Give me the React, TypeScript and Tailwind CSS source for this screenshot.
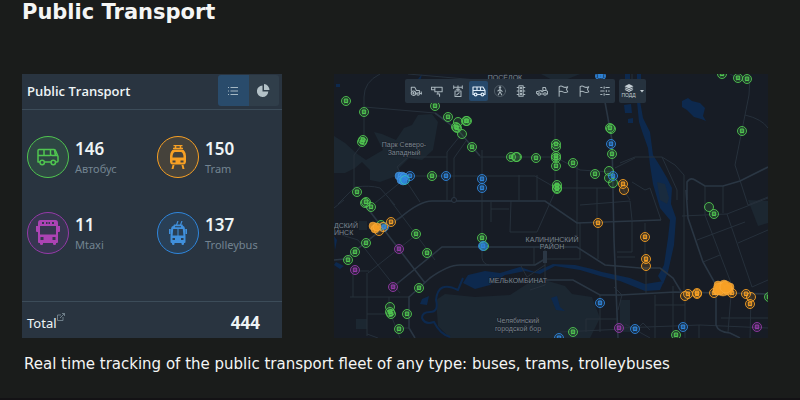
import type { ReactNode } from "react";

const GREEN = "#50c650";
const ORANGE = "#f7a024";
const BLUE = "#2f86dc";
const PURPLE = "#953aa8";

type Marker = [x: number, y: number, empty?: boolean];

const markers: { color: string; points: Marker[] }[] = [
  {
    color: GREEN,
    points: [
      [346, 101], [364, 112], [435, 106], [448, 117], [458, 122, true], [466, 121], [467, 121],
      [456, 127], [457, 128], [462, 134, true], [472, 147], [363, 140], [362, 142], [432, 176],
      [357, 192], [366, 202], [365, 203, true], [371, 207], [511, 157], [516, 157, true], [517, 157, true], [536, 158],
      [556, 144], [556, 147, true], [556, 156], [556, 158], [556, 166], [557, 185], [557, 188], [557, 189],
      [573, 163], [595, 174], [610, 128], [611, 129, true], [612, 154], [609, 171, true], [609, 178, true],
      [613, 183, true], [722, 74], [738, 78], [747, 79], [742, 131], [709, 207, true],
      [714, 214], [769, 297], [676, 335], [482, 238], [484, 246, true], [573, 332], [381, 225, true],
      [416, 234], [427, 253], [366, 243], [355, 252], [348, 260], [419, 288], [390, 307, true],
      [390, 312], [391, 314], [407, 314], [399, 329],
    ],
  },
  {
    color: BLUE,
    points: [
      [410, 176], [446, 176], [482, 179], [482, 188], [600, 76], [601, 76], [611, 144], [613, 176],
      [635, 329], [683, 327], [483, 246], [600, 303], [559, 338], [384, 227],
    ],
  },
  {
    color: ORANGE,
    points: [
      [623, 184], [624, 190, true], [645, 237], [646, 259], [646, 266, true], [685, 296, true],
      [688, 294], [697, 294], [697, 293], [714, 293], [732, 293], [746, 294], [751, 297, true],
      [750, 304], [598, 223], [391, 222], [379, 231, true], [383, 227, true],
    ],
  },
  {
    color: PURPLE,
    points: [[757, 327], [619, 328], [399, 249], [355, 270], [393, 287]],
  },
];

const clusters: { fill: string; edge: string; circles: [number, number, number][] }[] = [
  {
    fill: BLUE,
    edge: "#5aa9ee",
    circles: [[399, 176, 4], [402, 176, 4], [404, 177, 4], [401, 180, 4], [403, 181, 4]],
  },
  {
    fill: ORANGE,
    edge: "#ffb84d",
    circles: [
      [373, 226, 4], [375, 229, 4], [377, 227, 4],
      [718, 285, 4], [724, 284, 4], [730, 287, 4], [717, 291, 4], [723, 289, 7], [728, 290, 5], [719, 289, 6], [726, 287, 6],
    ],
  },
];

const mainRoads = [
  "M334 260L345 259L380 231L401 217Q420 201 432 201H545L577 223L661 220",
  "M393 287L442 247H577L605 265L640 268H660L673 278L682 293",
  "M415 338L409 328V297L430 278Q448 265 460 265H535L545 259",
  "M365 205L425 283",
  "M435 113L458 130L480 156",
  "M605 102L612 140L614 240L618 338",
  "M687 200V182Q690 177 695 180L705 186H723L740 181L768 167",
  "M686 190L688 218L703 262L716 285V325Q718 332 730 333L740 338",
  "M545 280H573L600 295H620L675 292L768 294",
];

const minorRoads = [
  "M380 74Q364 82 364 97V142L354 155V190",
  "M364 107L435 113",
  "M397 167L408 157H447M397 167L420 202",
  "M401 176H535L556 188H615",
  "M338 204L355 187Q370 185 380 188L395 205M375 203L402 181",
  "M447 200V152L460 136M454 200V158L466 141M482 150V258Q483 264 489 265",
  "M390 200L435 260M334 208L344 200M368 273L416 235M342 235L358 240L400 293",
  "M350 297H409M367 336V273M367 314H388M353 271V297M353 271H369M389 297V310L400 338M367 334L378 338M409 328H400",
  "M555 100V192L550 203L537 232H510L511 201M480 157H555L580 170L612 172L630 200",
  "M519 175V200M537 175V200M577 165V240M597 188V223M491 202V222M491 209H509",
  "M635 158L615 168M620 163L635 157H662L675 165L684 175V290M662 157L677 190V200",
  "M750 76L749 95L745 115L735 165L748 205M745 115Q762 119 768 128M730 74L745 82",
  "M705 186V215M723 186V213M748 205L768 197M682 216L727 214L768 198",
  "M705 215L731 283M727 214L752 287M697 240L745 222M703 262L720 255M738 243L768 230M752 287L768 280",
  "M731 295L728 332M751 297L750 338M620 328L700 325L768 328M721 318H768",
  "M646 268V293M673 286V338M655 295V338M655 305H685M685 293V338M699 325V338",
  "M534 247V265M545 250V285L530 290M521 266L527 277L545 265M545 259H580V223",
  "M560 332L625 329M586 332V319H618M600 295V332M614 287L622 295L618 310M580 205L630 201L632 220",
  "M598 223V259M632 74V100M617 252H632V221M617 257H635M645 223V265M632 182L645 190L650 188L661 220",
  "M408 74L500 82M625 324L650 338M636 330L643 323L650 330",
];

const water = [
  "M637 102L640 101L643 118L650 132L653 155L660 166L667 178L672 188L671 204L676 218L674 245L668 272L663 284L658 276L664 265L668 238L670 220L660 208L653 184L650 165L648 148L643 134L639 122Z",
  "M463 283L468 275L485 271L500 273L520 267L535 272L553 264L575 265L592 269L602 272L630 278L645 284L664 281L660 290L645 291L620 281L600 276L580 270L555 266L540 274L525 271L505 275L490 285L475 289Z",
  "M682 101L688 98L692 101L700 103L705 108L703 116L706 121L701 119L694 117L687 110L682 107Z",
  "M625 86H633V100H625ZM624 105L631 104L632 113L625 113ZM628 119L633 118V123H628ZM625 74H630V80H625ZM637 74H641V80H637Z",
  "M422 299L429 296L427 305L420 304ZM551 298L557 296L560 307L565 311L556 310ZM336 262L344 266L340 269L334 265ZM334 236L337 240L335 250Z",
  "M336 84H340V87H336ZM418 79L422 74L420 82Z",
];

const parks = [
  "M334 136L345 143L356 153L366 160L383 150L374 132L382 134L396 140L404 128L412 125L418 115L432 114L438 122L433 150L422 160L409 158L399 168L399 175L380 182L370 180L370 170L362 162L355 168L345 173L334 173Z",
  "M436 300L445 294L475 297L510 295L530 282L548 281L565 286L572 294L592 297L600 318L590 338H450L438 326Z",
  "M748 200L768 201V223L758 226Z",
  "M359 221H367V230H359ZM356 319H367V329H356ZM541 74H580L558 83Z",
  "M620 300H630V332H620Z",
];

function Map() {
  return (
    <svg
      className="absolute inset-0 h-full w-full"
      viewBox="334 74 434 264"
      preserveAspectRatio="xMidYMid slice"
      role="img"
      aria-label="Live positions of the public transport fleet"
    >
      <rect x="334" y="74" width="434" height="264" fill="#171c25" />
      <g fill="#1c2731">{parks.map((d) => <path key={d} d={d} />)}</g>
      <g fill="#0d294e">{water.map((d) => <path key={d} d={d} />)}</g>
      <path d="M657 182L665 184L669 198L667 204L660 200Z" fill="#192b3e" />
      <path
        d="M463 278L458 290Q438 280 436 300Q439 312 430 312Q422 312 422 318Q425 325 434 322Q440 334 450 337"
        fill="none"
        stroke="#0d294e"
        strokeWidth="2"
      />
      <g fill="none" stroke="#26303b" strokeWidth="1">
        {minorRoads.map((d) => <path key={d} d={d} />)}
      </g>
      <g fill="none" stroke="#2a3643" strokeWidth="1.6">
        {mainRoads.map((d) => <path key={d} d={d} />)}
      </g>
      <circle cx="454" cy="200" r="2.5" fill="#171c25" stroke="#2b3745" />
      <path d="M543 251H547V263H543Z" fill="#2b3745" />
      <g
        fill="#7c8791"
        stroke="#171c25"
        strokeWidth="1"
        paintOrder="stroke"
        textAnchor="middle"
        fontSize="7"
        className="font-['Liberation_Sans',sans-serif]"
      >
        <text x="404" y="147">Парк Северо-</text>
        <text x="404" y="155">Западный</text>
        <text x="505" y="80">ПОСЁЛОК</text>
        <text x="334" y="228" textAnchor="start">ДСКИЙ</text>
        <text x="334" y="235" textAnchor="start">ИНСК</text>
        <text x="552" y="242">КАЛИНИНСКИЙ</text>
        <text x="552" y="249">РАЙОН</text>
        <text x="518" y="283">МЕЛЬКОМБИНАТ</text>
        <text x="518" y="323">Челябинский</text>
        <text x="518" y="331">городской бор</text>
      </g>
      {markers.map(({ color, points }) => (
        <g key={color} stroke={color} fill={color}>
          {points.map(([x, y, empty]) => (
            <g key={`${x}-${y}`}>
              <circle cx={x} cy={y} r="4.5" fillOpacity="0.15" strokeWidth="0.9" />
              {!empty && (
                <path
                  d={`M${x - 1.7} ${y - 2}H${x + 1.7}V${y + 1.5}H${x - 1.7}ZM${x - 1.3} ${y + 1.5}V${y + 2.3}M${x + 1.3} ${y + 1.5}V${y + 2.3}`}
                  fillOpacity="0.5"
                  strokeWidth="1"
                />
              )}
            </g>
          ))}
        </g>
      ))}
      {clusters.map(({ fill, edge, circles }) => (
        <g key={fill} fill={fill} fillOpacity="0.85" stroke={edge} strokeWidth="0.6" strokeOpacity="0.7">
          {circles.map(([x, y, r]) => <circle key={`${x}-${y}`} cx={x} cy={y} r={r} />)}
        </g>
      ))}
      <g fill={BLUE} fillOpacity="0.6">
        <circle cx="405" cy="180" r="4.4" stroke="#35c5b8" strokeWidth="0.8" />
        <circle cx="483" cy="246" r="4" />
        <circle cx="384" cy="227" r="3" />
      </g>
    </svg>
  );
}

function Line({ children, size = 14 }: { children: ReactNode; size?: number }) {
  return (
    <svg
      width={size}
      height={size}
      viewBox="0 0 14 14"
      fill="none"
      stroke="currentColor"
      strokeWidth="1.2"
      strokeLinecap="round"
      strokeLinejoin="round"
      aria-hidden="true"
    >
      {children}
    </svg>
  );
}

const flag = <path d="M2.5 13V2Q4.500 0.5 7 2T12.500 2L11 5L12.500 8Q9.500 9.500 7 8T2.500 8" />;

const tools: { label: string; active?: boolean; icon: ReactNode }[] = [
  {
    label: "Road works",
    icon: (
      <>
        <circle cx="4" cy="9.500" r="2.600" />
        <circle cx="4" cy="9.500" r="0.600" />
        <circle cx="9.500" cy="10.500" r="1.500" />
        <path d="M1.500 7V2.500H5.500L7.500 6.500H11V9M7 9.500H8M11 9.500L13.500 10.500L13 8" />
      </>
    ),
  },
  { label: "Cameras", icon: <path d="M0.500 2.500H13V8H4.500V5.500H0.500ZM4.500 5.500V2.500M8 8V10.500H10V13M7 10.500H8" /> },
  {
    label: "Detectors",
    icon: <path d="M2 1V4M12 1V4M2 2.500H12M7 1V7M5 5H9M3.500 7H10.500V13.500H3.500ZM5.500 11.500L8.500 9" />,
  },
  {
    label: "Public transport",
    active: true,
    icon: (
      <>
        <path d="M2.300 10.500H1V3H11L13 6.500V10.500H11.800M5 10.500H9M1 6.500H13M5 3V6.500M8.500 3V6.500" />
        <circle cx="3.600" cy="10.500" r="1.400" />
        <circle cx="10.400" cy="10.500" r="1.400" />
      </>
    ),
  },
  {
    label: "Pedestrians",
    icon: (
      <>
        <circle cx="7" cy="7" r="6.500" strokeWidth="0.600" strokeOpacity="0.600" />
        <circle cx="7" cy="3" r="0.900" fill="currentColor" />
        <path d="M7 5V8L9 11.500M7 8L5 11.500M4.500 7L7 5L9.500 7.500" />
      </>
    ),
  },
  {
    label: "Traffic lights",
    icon: (
      <>
        <path d="M4.500 0.800H9.500V13.200H4.500ZM2.500 3H4.500M2.500 7H4.500M2.500 11H4.500M9.500 3H11.500M9.500 7H11.500M9.500 11H11.500" />
        <circle cx="7" cy="3.500" r="0.900" />
        <circle cx="7" cy="7" r="0.900" />
        <circle cx="7" cy="10.500" r="0.900" />
      </>
    ),
  },
  {
    label: "Tow trucks",
    icon: (
      <>
        <path d="M0.500 9.500V8L6 6.500L7 8H8V3H11L12 6.500L13.500 7.500V10.500H12.500M5.500 10.500H8.500M0.500 9.500L2 10.500M8 6.500H12" />
        <circle cx="3.700" cy="10.500" r="1.500" />
        <circle cx="10.500" cy="10.500" r="1.500" />
      </>
    ),
  },
  { label: "Events", icon: flag },
  { label: "Plans", icon: flag },
  {
    label: "Settings",
    icon: <path d="M2 3H3.500M6 2V4M8 3H12M2 7H6M8.500 6V8M11 7H12M2 11H3.500M6 10V12M8 11H12" />,
  },
];

function Toolbar() {
  return (
    <div className="absolute top-[5px] left-[71px] flex gap-1">
      <div role="toolbar" aria-label="Map layers" className="flex gap-[2px] rounded-[2px] bg-[#26323e] px-px py-[2px]">
        {tools.map((tool) => (
          <button
            key={tool.label}
            type="button"
            aria-label={tool.label}
            aria-pressed={!!tool.active}
            className={
              tool.active
                ? "flex h-5 w-[19px] items-center justify-center rounded-[2px] bg-[#26496b] text-[#dbe9f5]"
                : "flex h-5 w-[19px] items-center justify-center rounded-[2px] text-[#a9b6bd]"
            }
          >
            <Line size={tool.active ? 14 : 12}>{tool.icon}</Line>
          </button>
        ))}
      </div>
      <button
        type="button"
        className="flex w-[27px] items-center justify-center gap-1 rounded-[2px] bg-[#26323e] text-[#c3cdd3]"
      >
        <span className="flex flex-col items-center">
          <svg width="10" height="8" viewBox="0 0 10 9" fill="currentColor" aria-hidden="true">
            <path d="M5 0L10 2.500L5 5L0 2.500Z" />
            <path d="M0 4.500L1.500 3.800L5 5.600L8.500 3.800L10 4.500L5 7Z" />
            <path d="M0 6.500L1.500 5.800L5 7.600L8.500 5.800L10 6.500L5 9Z" />
          </svg>
          <span className="text-[5px] leading-[6px]">ПОДД</span>
        </span>
        <svg width="4" height="3" viewBox="0 0 4 3" fill="currentColor" aria-hidden="true">
          <path d="M0 0H4L2 2.500Z" />
        </svg>
      </button>
    </div>
  );
}

function VanIcon() {
  return (
    <svg width="22" height="18" viewBox="0 0 22 18" fill="none" stroke="currentColor" strokeWidth="1.500" strokeLinejoin="round" aria-hidden="true">
      <path d="M3 14H1V2.500Q1 1.500 2 1.500H17Q18.200 1.500 18.700 3L21 8.500V13Q21 14 20 14H18.500M7.500 14H14" />
      <path d="M1 7.500H13.500M13.500 1.500V6Q13.500 7.500 15 7.500H20.500M7 1.500V7.500M17.500 2L18.500 7.500" />
      <circle cx="5.200" cy="14.500" r="2.200" />
      <circle cx="16.300" cy="14.500" r="2.200" />
    </svg>
  );
}

function TramIcon() {
  return (
    <svg width="18" height="24" viewBox="0 0 18 24" fill="currentColor" aria-hidden="true">
      <path d="M4.500 0H13.500V1.300H12L12.500 2.800H14V4H4V2.800H5.500L6 1.300H4.500ZM7.300 1.300V2.800H10.700V1.300Z" fillRule="evenodd" />
      <path
        fillRule="evenodd"
        d="M5 4.500H13Q16.500 5 17 11V17Q16.500 19.500 14.500 19.500H3.500Q1.500 19.500 1 17V11Q1.500 5 5 4.500ZM6 7Q3.500 7.500 3.500 12.500H14.500Q14.500 7.500 12 7ZM3.500 15.500V17.500H6.500V15.500ZM11.500 15.500V17.500H14.500V15.500Z"
      />
      <path d="M3.500 20H5.500L4.500 24H2.500ZM12.500 20H14.500L15.500 24H13.500Z" />
    </svg>
  );
}

function BusIcon() {
  return (
    <svg width="24" height="26" viewBox="0 0 24 26" fill="currentColor" aria-hidden="true">
      <path
        fillRule="evenodd"
        d="M4.500 0H19.500Q22 0 22 3V22Q22 23 21 23H20V24Q20 25 18.500 25T17 24V23H7V24Q7 25 5.500 25T4 24V23H3Q2 23 2 22V3Q2 0 4.500 0ZM4 6V14.500H20V6ZM6 2V4H8V2ZM10 2V4H11.500V2ZM12.500 2V4H14V2ZM16 2V4H18V2ZM4.500 17V20H7.500V17ZM16.500 17V20H19.500V17Z"
      />
      <path d="M0 6H2V12H1Q0 12 0 11ZM22 6H24V11Q24 12 23 12H22Z" />
    </svg>
  );
}

function TrolleyIcon() {
  return (
    <svg width="18" height="24" viewBox="0 0 18 24" fill="currentColor" aria-hidden="true">
      <path d="M7.500 4L9 0M11.500 4L13 0" stroke="currentColor" strokeWidth="1.200" />
      <path
        fillRule="evenodd"
        d="M5 3.500H13.500L14 5Q15.500 5 15.800 7L16.500 15V21Q16.500 22 15.500 22H15V23Q15 24 13.800 24T12.500 23V22H5.500V23Q5.500 24 4.300 24T3 23V22H2.500Q1.500 22 1.500 21V15L2.200 7Q2.500 5 4.300 5ZM4.200 8L3.600 14.500H8.500V8ZM9.500 8V14.500H14.400L13.800 8ZM3.500 17V19H6V17ZM12 17V19H14.500V17ZM6 5.200V6.200H12V5.200Z"
      />
      <path d="M0 8H1.800L1.500 13H0ZM16.200 8H18V13H16.500Z" />
    </svg>
  );
}

const fleet = [
  { count: 146, label: "Автобус", icon: <VanIcon />, ring: "border-[#50c650] bg-[#2e4743] text-[#50c650]" },
  { count: 150, label: "Tram", icon: <TramIcon />, ring: "border-[#f7a024] bg-[#45423b] text-[#f7a024]" },
  { count: 11, label: "Mtaxi", icon: <BusIcon />, ring: "border-[#953aa8] bg-[#363650] text-[#ac43b4]" },
  { count: 137, label: "Trolleybus", icon: <TrolleyIcon />, ring: "border-[#2f86dc] bg-[#293f55] text-[#4090dc]" },
];

function FleetPanel() {
  return (
    <section className="flex w-[260px] shrink-0 flex-col bg-[#293440] font-['Noto_Sans','Open_Sans',sans-serif] text-[#eef4f6]">
      <header className="flex h-9 items-center justify-between border-b border-[#3c4c59] pr-[3px] pb-[2px] pl-[5px]">
        <h2 className="font-['Open_Sans','Noto_Sans',sans-serif] text-[13px] leading-5 font-semibold">Public Transport</h2>
        <div className="flex overflow-hidden rounded-[3px]">
          <button type="button" aria-label="List view" aria-pressed="true" className="flex h-[31px] w-[31px] items-center justify-center bg-[#294b6b] pr-[2px] text-[#a5b8c4]">
            <svg width="10" height="8" viewBox="0 0 10 8" fill="currentColor" aria-hidden="true">
              <path d="M0 0H1V1H0ZM2.500 0H10V1H2.500ZM0 3.500H1V4.500H0ZM2.500 3.500H10V4.500H2.500ZM0 7H1V8H0ZM2.500 7H10V8H2.500Z" />
            </svg>
          </button>
          <button type="button" aria-label="Chart view" aria-pressed="false" className="flex h-[31px] w-[30px] items-center justify-center bg-[#303e4a] pr-[2px] text-[#b3c1c7]">
            <svg width="13" height="13" viewBox="0 0 13 13" fill="currentColor" aria-hidden="true">
              <path d="M5.500 1.500V7.500H11.300A5.700 5.700 0 1 1 5.500 1.500Z" />
              <path d="M7 0A6 6 0 0 1 12.500 6H7Z" />
            </svg>
          </button>
        </div>
      </header>
      <ul className="grid grow grid-cols-[130px_1fr] content-start gap-y-[34px] pt-[26px] pl-[5px]">
        {fleet.map((item) => (
          <li key={item.label} className="flex h-[42px] gap-[6px]">
            <span className={`flex h-[42px] w-[42px] shrink-0 items-center justify-center rounded-full border ${item.ring}`}>
              {item.icon}
            </span>
            <span className="flex flex-col pt-[3px]">
              <strong className="text-[17px] leading-5 font-semibold">{item.count}</strong>
              <span className="text-[11px] leading-5 text-[#738491]">{item.label}</span>
            </span>
          </li>
        ))}
      </ul>
      <footer className="flex h-[37px] items-center justify-between border-t border-[#3c4c59] pt-[5px] pr-[22px] pl-[5px]">
        <a href="#total" className="flex text-[13px] leading-5">
          Total
          <svg width="8" height="8" viewBox="0 0 8 8" fill="none" stroke="#7f909b" strokeWidth="0.800" aria-hidden="true">
            <path d="M4 2H0.500V7.500H6V4M5 0.500H7.500V3M7.500 0.500L3 5" />
          </svg>
        </a>
        <strong className="text-[17px] leading-5 font-bold">444</strong>
      </footer>
    </section>
  );
}

export default function App() {
  return (
    <main className="min-h-screen border-b-2 border-[#131215] bg-[#1a1c1b] pr-8 pl-[22px] font-['DejaVu_Sans',sans-serif] text-[#f4f5f4]">
      <h1 className="text-[21px] leading-6 font-bold">Public Transport</h1>
      <div className="mt-[50px] flex h-[264px] gap-[52px]">
        <FleetPanel />
        <section className="relative min-w-0 grow overflow-hidden bg-[#171c25] font-['Liberation_Sans',sans-serif]">
          <Map />
          <Toolbar />
        </section>
      </div>
      <p className="mt-4 pl-[2px] text-[15px] leading-5">
        Real time tracking of the public transport fleet of any type: buses, trams, trolleybuses
      </p>
    </main>
  );
}
